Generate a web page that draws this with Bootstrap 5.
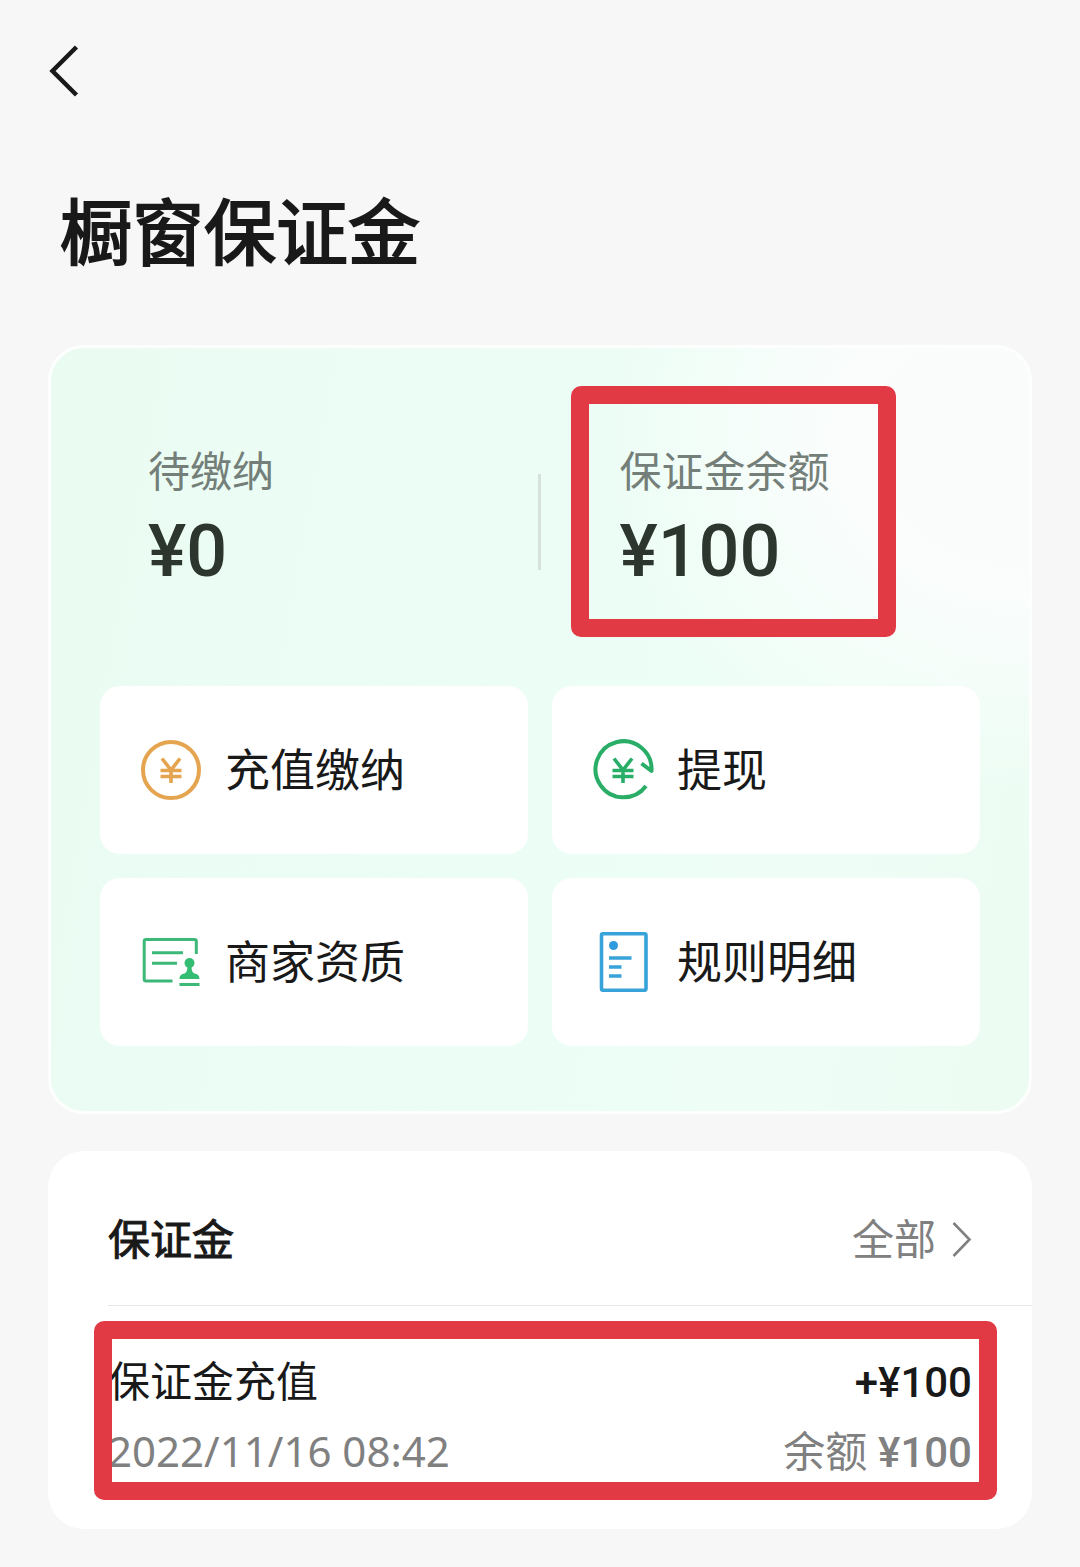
<!DOCTYPE html>
<html lang="zh-CN">
<head>
<meta charset="utf-8">
<meta name="viewport" content="width=device-width, initial-scale=1">
<title>橱窗保证金</title>
<link rel="stylesheet" href="https://cdn.jsdelivr.net/npm/bootstrap@5.3.0/dist/css/bootstrap.min.css">
<style>
  body { background: #f7f7f7; color: #191919; font-family: "Noto Sans", "Noto Sans CJK SC", sans-serif; font-size: 42px; line-height: 60px; }
  .page { padding: 44px 48px 38px; }
  .back-btn { line-height: 0; }
  .page-title { font-size: 72px; line-height: 96px; font-weight: 400; -webkit-text-stroke: 2px currentColor; margin: 85px 0 66px; padding-left: 12px; }
  .deposit-panel { border: 3px solid #fcfffd; border-radius: 36px; padding: 93px 49px 65px;
    background: radial-gradient(ellipse 44% 46% at 100% 12%, #fafcfc 0%, #fafdfc 45%, rgba(250,253,252,0) 100%), linear-gradient(100deg, #eafcf2 0%, #ebfdf5 45%, #eefef6 75%, #ecfcf3 100%); }
  .stats { margin-bottom: 83px; }
  .stat-due { padding-left: 48px; }
  .stat-balance { padding-left: 78px; }
  .stat-rule { width: 3px; height: 96px; background: #d6e3dc; }
  .stat-label { color: #747f79; }
  .stat-amount { font-family: Roboto, sans-serif; font-size: 72px; line-height: 102px; font-weight: 500; color: #2d352f; }
  .tile-row { --bs-gutter-x: 24px; --bs-gutter-y: 24px; }
  .tile { height: 168px; padding-left: 41px; gap: 24px; border-radius: 20px; background: #fff; color: #191919; font-size: 45px; }
  .marker { position: absolute; border: 18px solid #e23a45; border-radius: 10px; pointer-events: none; }
  .marker-balance { inset: -55px -67px -34px -48px; }
  .marker-record { inset: -30px -25px -19px -14px; }
  .records { border-radius: 36px; background: #fff; margin-top: 37px; padding: 58px 0 48px 60px; }
  .records-head { padding: 0 60px 36px 0; border-bottom: 1px solid #e6e6e6; }
  .records-head h2 { font-size: 42px; line-height: 60px; font-weight: 400; -webkit-text-stroke: 1px currentColor; }
  .soft { color: #808080; }
  .all-link { gap: 16px; }
  .record { margin: 45px 60px 0 0; }
  .record-line { height: 60px; }
  .record-line + .record-line { margin-top: 10px; }
  .record-sum { font-family: Roboto, sans-serif; font-weight: 500; }
</style>
</head>
<body>
<main class="page container-fluid">
  <button type="button" class="back-btn btn p-0 border-0 d-block" aria-label="返回">
    <svg width="32" height="54" viewBox="0 0 32 54" fill="none" stroke="#191919" stroke-width="4.500"><path d="M28.500 3 4.500 27l24 24"/></svg>
  </button>
  <h1 class="page-title">橱窗保证金</h1>

  <section class="deposit-panel">
    <div class="stats d-flex">
      <div class="stat-due flex-fill w-50">
        <div class="stat-label">待缴纳</div>
        <div class="stat-amount">¥0</div>
      </div>
      <div class="stat-rule flex-shrink-0 align-self-center"></div>
      <div class="stat-balance flex-fill w-50">
        <div class="d-inline-block position-relative">
          <div class="stat-label">保证金余额</div>
          <div class="stat-amount">¥100</div>
          <span class="marker marker-balance"></span>
        </div>
      </div>
    </div>

    <nav class="tile-row row row-cols-2">
      <div class="col"><a href="#" class="tile d-flex align-items-center text-decoration-none">
        <svg width="60" height="60" viewBox="0 0 60 60" fill="none" stroke="#e5a550" stroke-width="4"><circle cx="30" cy="30" r="28"/><path d="M21 18.500 30 30l9-11.500M30 29v14M19.500 30.500h21M19.500 36.500h21" stroke-width="3.600"/></svg>
        <span>充值缴纳</span></a></div>
      <div class="col"><a href="#" class="tile d-flex align-items-center text-decoration-none">
        <svg width="60" height="60" viewBox="0 0 60 60" fill="none" stroke="#2aae67" stroke-width="4" overflow="visible"><path d="M53 46A28 28 0 1 1 58.500 31l-10-7.500" stroke-linejoin="round"/><path d="M21 18.500 30 30l9-11.500M30 29v14M19.500 30.500h21M19.500 36.500h21" stroke-width="3.600"/></svg>
        <span>提现</span></a></div>
      <div class="col"><a href="#" class="tile d-flex align-items-center text-decoration-none">
        <svg width="60" height="60" viewBox="0 0 60 60" fill="none" stroke="#3cb878" stroke-width="3"><path d="M31.500 49H5a1.800 1.800 0 0 1-1.800-1.800V9.300A1.800 1.800 0 0 1 5 7.500h48.500a1.800 1.800 0 0 1 1.800 1.800V22"/><path d="M11 20.800h31M11 31.200h25M38.500 52.500h20"/><g fill="#35bd74" stroke="none"><circle cx="48.500" cy="31" r="5"/><path d="M46.500 34h4c0 4 .8 6.500 3 7.500 3 .5 5 2 5 5.500h-20c0-3.500 2-5 5-5.500 2.200-1 3-3.500 3-7.500z"/></g></svg>
        <span>商家资质</span></a></div>
      <div class="col"><a href="#" class="tile d-flex align-items-center text-decoration-none">
        <svg width="60" height="60" viewBox="0 0 60 60" fill="none" stroke="#38a3d9" stroke-width="3.600"><rect x="8.500" y="1.800" width="44.500" height="56.500" rx="1.500"/><circle cx="20.500" cy="13.500" r="4.500" fill="#2f9ade" stroke="none"/><path d="M16 26h22.500M16 35h12.500M16 44h12.500"/></svg>
        <span>规则明细</span></a></div>
    </nav>
  </section>

  <section class="records">
    <header class="records-head d-flex justify-content-between align-items-center">
      <h2 class="m-0">保证金</h2>
      <a href="#" class="all-link soft d-flex align-items-center text-decoration-none">全部
        <svg width="20" height="36" viewBox="0 0 20 36" fill="none" stroke="#808080" stroke-width="2.600"><path d="M1.500 2 17.500 18.500 1.500 35"/></svg></a>
    </header>
    <div class="record position-relative">
      <div class="record-line d-flex justify-content-between align-items-baseline"><span>保证金充值</span><span class="record-sum">+¥100</span></div>
      <div class="record-line soft d-flex justify-content-between align-items-baseline"><time datetime="2022-11-16T08:42">2022/11/16 08:42</time><span>余额 <span class="record-sum">¥100</span></span></div>
      <span class="marker marker-record"></span>
    </div>
  </section>
</main>
<script src="https://cdn.jsdelivr.net/npm/bootstrap@5.3.0/dist/js/bootstrap.bundle.min.js"></script>
</body>
</html>
